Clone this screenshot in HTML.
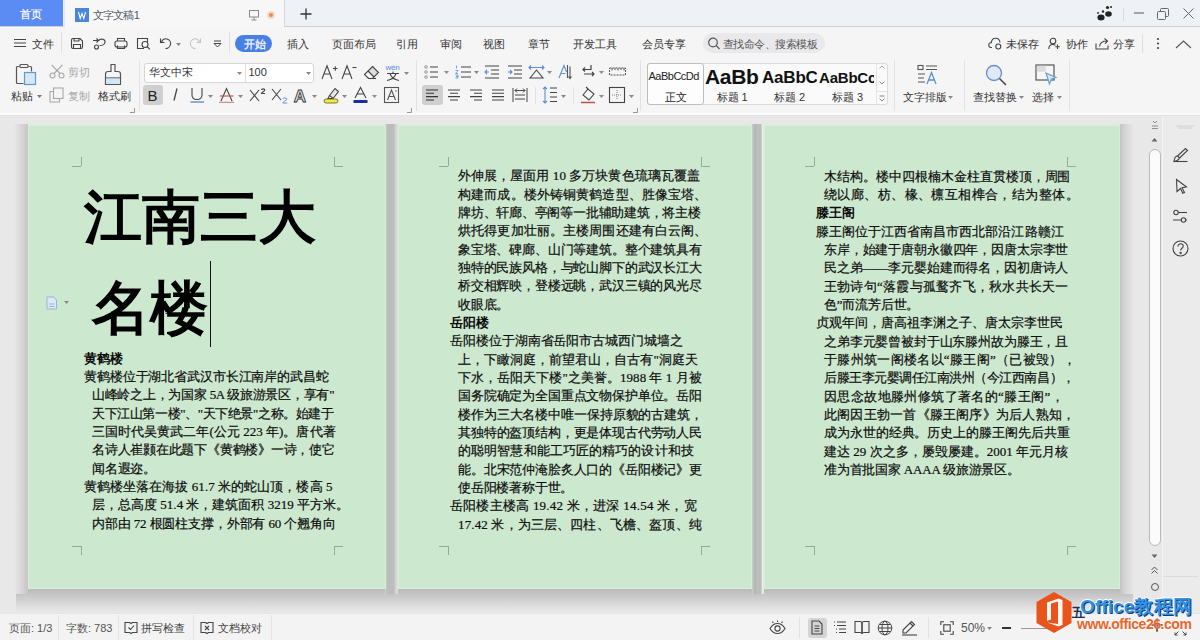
<!DOCTYPE html><html><head><meta charset="utf-8"><title>WPS 文字文稿1</title><style>
*{box-sizing:border-box}
html,body{margin:0;padding:0}
body{width:1200px;height:640px;overflow:hidden;position:relative;background:#e3e3e3;font-family:"Liberation Sans",sans-serif;color:#333}
.a{position:absolute}
svg.a{overflow:visible}
.tl{position:absolute;white-space:nowrap;font-family:"Liberation Serif",serif;font-size:13px;line-height:18.33px;color:#0c0c0c;-webkit-text-stroke:0.2px #0c0c0c}
.b{font-weight:bold;-webkit-text-stroke:0}
.page{position:absolute;top:124.5px;height:464px;background:#cce8cf;border:1px solid #d8ecd9}
</style></head><body>
<div class="a" style="left:0px;top:0px;width:1200px;height:27px;background:#eef1f5;border-bottom:1px solid #cdd1d6"></div>
<div class="a" style="left:0px;top:0px;width:63px;height:26px;background:#5a8cf4"></div>
<div class="a" style="left:20px;top:6.5px;font-size:11px;line-height:15px;color:#fff;font-weight:normal;font-family:'Liberation Sans',sans-serif;white-space:nowrap;-webkit-text-stroke:0.2px #fff">首页</div>
<div class="a" style="left:64px;top:0px;width:221px;height:27px;background:#f7f7f7;border-right:1px solid #d4d8dc;border-left:1px solid #e6e6e6"></div>
<div class="a" style="left:75px;top:8px;width:14px;height:14px;background:#4a86dc"></div>
<svg class="a" style="left:75px;top:8px" width="14" height="14" viewBox="0 0 14 14" fill="none" stroke="#fff" stroke-width="1.1" ><path d="M3.5 4 L5.2 10.5 L7 5.5 L8.8 10.5 L10.5 4" /></svg>
<div class="a" style="left:92.5px;top:7.5px;font-size:11px;line-height:15px;color:#505868;font-weight:normal;font-family:'Liberation Sans',sans-serif;white-space:nowrap;letter-spacing:-0.7px">文字文稿1</div>
<svg class="a" style="left:248px;top:9px" width="12" height="12" viewBox="0 0 12 12" fill="none" stroke="#888" stroke-width="1" ><rect x="1.5" y="1.5" width="9" height="6.5"/><path d="M6 8v3M3.5 11h5"/></svg>
<div class="a" style="left:267px;top:11px;width:8px;height:8px;border-radius:50%;background:#f6d9c4"></div>
<div class="a" style="left:268.8px;top:12.8px;width:4.4px;height:4.4px;border-radius:50%;background:#e98a55"></div>
<svg class="a" style="left:300px;top:8px" width="12" height="12" viewBox="0 0 12 12" fill="none" stroke="#333" stroke-width="1.3" ><path d="M6 0.5V11.5M0.5 6H11.5"/></svg>
<svg class="a" style="left:1095px;top:4px" width="20" height="18" viewBox="0 0 20 18" fill="none" stroke="none" stroke-width="1" ><ellipse cx="6" cy="13.5" rx="3.6" ry="3" fill="#222"/><ellipse cx="13.5" cy="10" rx="3.3" ry="2.8" fill="#222"/><circle cx="12.5" cy="3.5" r="1.6" fill="#222"/><circle cx="8" cy="7.5" r="1.2" fill="#222"/><circle cx="3" cy="9" r="0.9" fill="#222"/><circle cx="16" cy="3" r="1" fill="#222"/></svg>
<div class="a" style="left:1123px;top:8px;width:1px;height:13px;background:#d6d9dd"></div>
<svg class="a" style="left:1134px;top:12px" width="10" height="2" viewBox="0 0 10 2" fill="none" stroke="#666" stroke-width="1.1" ><path d="M0 1H10"/></svg>
<svg class="a" style="left:1157px;top:8px" width="12" height="12" viewBox="0 0 12 12" fill="none" stroke="#666" stroke-width="1" ><rect x="0.5" y="3.5" width="8" height="8" rx="1"/><path d="M3.5 3.5V1.5Q3.5 0.5 4.5 0.5H10.5Q11.5 0.5 11.5 1.5V7.5Q11.5 8.5 10.5 8.5H8.5"/></svg>
<svg class="a" style="left:1183px;top:8px" width="11" height="11" viewBox="0 0 11 11" fill="none" stroke="#666" stroke-width="1" ><path d="M0.5 0.5L10.5 10.5M10.5 0.5L0.5 10.5"/></svg>
<div class="a" style="left:0px;top:27px;width:1200px;height:31px;background:#f5f5f5"></div>
<svg class="a" style="left:14px;top:38px" width="12" height="10" viewBox="0 0 12 10" fill="none" stroke="#444" stroke-width="1.1" ><path d="M0 1.5H12M0 5H12M0 8.5H12"/></svg>
<div class="a" style="left:32px;top:36.5px;font-size:11px;line-height:15px;color:#333;font-weight:normal;font-family:'Liberation Sans',sans-serif;white-space:nowrap;">文件</div>
<div class="a" style="left:61px;top:32px;width:1px;height:21px;background:#e0e0e0"></div>
<svg class="a" style="left:70px;top:37px" width="14" height="13" viewBox="0 0 14 13" fill="none" stroke="#444" stroke-width="1.1" ><path d="M3 1.5H10L12.5 4V10Q12.5 11.5 11 11.5H3Q1.5 11.5 1.5 10V3Q1.5 1.5 3 1.5Z"/><path d="M4 1.5V4H9V1.5M3.5 11.5V7.5H10.5V11.5"/></svg>
<svg class="a" style="left:92px;top:37px" width="15" height="13" viewBox="0 0 15 13" fill="none" stroke="#444" stroke-width="1.1" ><path d="M1 3.5H6M4.5 1.5L6.5 3.5L4.5 5.5"/><path d="M6.5 3.5C9 1 13.5 2 13 5.5C12.5 8 9 8.5 7.5 8.5"/><circle cx="4.5" cy="10" r="2"/></svg>
<svg class="a" style="left:114px;top:37px" width="14" height="13" viewBox="0 0 14 13" fill="none" stroke="#444" stroke-width="1.1" ><path d="M3.5 4V1.5H10.5V4"/><rect x="1" y="4" width="12" height="6" rx="2"/><path d="M3.5 8.5V11.5H10.5V8.5"/></svg>
<svg class="a" style="left:136px;top:37px" width="15" height="13" viewBox="0 0 15 13" fill="none" stroke="#444" stroke-width="1.1" ><path d="M8 11.5H1.5V1.5H11.5V5"/><circle cx="9" cy="7.5" r="3"/><path d="M11 9.5L13.8 12.3"/></svg>
<svg class="a" style="left:159px;top:37px" width="13" height="13" viewBox="0 0 13 13" fill="none" stroke="#444" stroke-width="1.1" ><path d="M2.5 5C3.5 2.5 6 1.5 8 2C10.5 2.6 12 5 11.5 7.5C11 10 8.5 11.5 6.5 11.5"/><path d="M1.5 1.5V5.5H5.5"/></svg>
<svg class="a" style="left:176.0px;top:43.0px" width="5" height="3" viewBox="0 0 5 3" fill="#888" stroke="none" stroke-width="1" ><path d="M0 0H5L2.5 3Z"/></svg>
<svg class="a" style="left:189px;top:37px" width="13" height="13" viewBox="0 0 13 13" fill="none" stroke="#c4c4c4" stroke-width="1.1" ><path d="M10.5 5C9.5 2.5 7 1.5 5 2C2.5 2.6 1 5 1.5 7.5C2 10 4.5 11.5 6.5 11.5"/><path d="M11.5 1.5V5.5H7.5"/></svg>
<svg class="a" style="left:213px;top:40px" width="9" height="8" viewBox="0 0 9 8" fill="none" stroke="#444" stroke-width="1" ><path d="M1 1H8M1 3.5L4.5 7L8 3.5Z"/></svg>
<div class="a" style="left:229px;top:32px;width:1px;height:21px;background:#e0e0e0"></div>
<div class="a" style="left:234.8px;top:34.5px;width:37.5px;height:17px;background:#4a80e6;border-radius:8.5px"></div>
<div class="a" style="left:243.5px;top:36.5px;font-size:11px;line-height:15px;color:#fff;font-weight:normal;font-family:'Liberation Sans',sans-serif;white-space:nowrap;-webkit-text-stroke:0.25px #fff">开始</div>
<div class="a" style="left:287px;top:37.0px;font-size:11px;line-height:15px;color:#333;font-weight:normal;font-family:'Liberation Sans',sans-serif;white-space:nowrap;">插入</div>
<div class="a" style="left:331.5px;top:37.0px;font-size:11px;line-height:15px;color:#333;font-weight:normal;font-family:'Liberation Sans',sans-serif;white-space:nowrap;">页面布局</div>
<div class="a" style="left:396px;top:37.0px;font-size:11px;line-height:15px;color:#333;font-weight:normal;font-family:'Liberation Sans',sans-serif;white-space:nowrap;">引用</div>
<div class="a" style="left:440px;top:37.0px;font-size:11px;line-height:15px;color:#333;font-weight:normal;font-family:'Liberation Sans',sans-serif;white-space:nowrap;">审阅</div>
<div class="a" style="left:483px;top:37.0px;font-size:11px;line-height:15px;color:#333;font-weight:normal;font-family:'Liberation Sans',sans-serif;white-space:nowrap;">视图</div>
<div class="a" style="left:528px;top:37.0px;font-size:11px;line-height:15px;color:#333;font-weight:normal;font-family:'Liberation Sans',sans-serif;white-space:nowrap;">章节</div>
<div class="a" style="left:573px;top:37.0px;font-size:11px;line-height:15px;color:#333;font-weight:normal;font-family:'Liberation Sans',sans-serif;white-space:nowrap;">开发工具</div>
<div class="a" style="left:641.5px;top:37.0px;font-size:11px;line-height:15px;color:#333;font-weight:normal;font-family:'Liberation Sans',sans-serif;white-space:nowrap;">会员专享</div>
<div class="a" style="left:703px;top:33px;width:122px;height:20px;background:#e9e9eb;border-radius:10px"></div>
<svg class="a" style="left:707px;top:37px" width="14" height="13" viewBox="0 0 14 13" fill="none" stroke="#555" stroke-width="1.2" ><circle cx="6" cy="5.5" r="4.3"/><path d="M9.2 8.7L12.5 12"/></svg>
<div class="a" style="left:722.5px;top:36.5px;font-size:11px;line-height:15px;color:#555;font-weight:normal;font-family:'Liberation Sans',sans-serif;white-space:nowrap;letter-spacing:-0.45px">查找命令、搜索模板</div>
<svg class="a" style="left:988px;top:37px" width="15" height="13" viewBox="0 0 15 13" fill="none" stroke="#444" stroke-width="1.1" ><path d="M4 10.5H3C1.5 10.5 0.8 9.2 0.8 8C0.8 6.5 2 5.5 3.3 5.6C3.6 3 5.5 1.3 7.6 1.3C10 1.3 11.8 3 12 5.5"/><circle cx="10.3" cy="9.5" r="2.5"/></svg>
<div class="a" style="left:1006px;top:36.5px;font-size:11px;line-height:15px;color:#333;font-weight:normal;font-family:'Liberation Sans',sans-serif;white-space:nowrap;">未保存</div>
<svg class="a" style="left:1048px;top:37px" width="13" height="13" viewBox="0 0 13 13" fill="none" stroke="#444" stroke-width="1.1" ><circle cx="5" cy="4" r="2.8"/><path d="M0.8 12C0.8 9 2.5 7.5 5 7.5C6 7.5 6.8 7.8 7.4 8.2M9.5 7.5V12M7.3 9.8H11.8"/></svg>
<div class="a" style="left:1065.5px;top:36.5px;font-size:11px;line-height:15px;color:#333;font-weight:normal;font-family:'Liberation Sans',sans-serif;white-space:nowrap;">协作</div>
<svg class="a" style="left:1095px;top:37px" width="15" height="13" viewBox="0 0 15 13" fill="none" stroke="#444" stroke-width="1.1" ><path d="M1 6.5V12H13V8.5"/><path d="M4.5 9.5C5 6 8 4 12 4M9.5 1.5L12.5 4L10 6.8"/></svg>
<div class="a" style="left:1112.5px;top:36.5px;font-size:11px;line-height:15px;color:#333;font-weight:normal;font-family:'Liberation Sans',sans-serif;white-space:nowrap;">分享</div>
<div class="a" style="left:1142px;top:34px;width:1px;height:19px;background:#dedede"></div>
<svg class="a" style="left:1156px;top:37px" width="4" height="13" viewBox="0 0 4 13" fill="#444" stroke="none" stroke-width="1" ><circle cx="2" cy="2" r="1.1"/><circle cx="2" cy="6.5" r="1.1"/><circle cx="2" cy="11" r="1.1"/></svg>
<svg class="a" style="left:1175px;top:40px" width="17" height="9" viewBox="0 0 17 9" fill="none" stroke="#555" stroke-width="1.1" ><path d="M1 8L8.5 1L16 8"/></svg>
<div class="a" style="left:0px;top:58px;width:1200px;height:56px;background:#f5f5f5"></div>
<div class="a" style="left:0px;top:113px;width:1200px;height:3px;background:#fbfbfb;border-bottom:1px solid #e2e2e2"></div>
<svg class="a" style="left:15px;top:63px" width="22" height="23" viewBox="0 0 22 23" fill="none" stroke="#555" stroke-width="1.2" ><path d="M4.5 3.5H2.5C1.8 3.5 1.5 4 1.5 4.5V19.5C1.5 20 1.8 20.5 2.5 20.5H8.5"/><path d="M13.5 3.5H15.5C16.2 3.5 16.5 4 16.5 4.5V8.5"/><rect x="5" y="1.5" width="8" height="3" rx="1"/><rect x="9.5" y="9.5" width="11" height="12" fill="#d6e8f6" stroke="#5a9bd5"/></svg>
<div class="a" style="left:11px;top:89.0px;font-size:11px;line-height:15px;color:#333;font-weight:normal;font-family:'Liberation Sans',sans-serif;white-space:nowrap;">粘贴</div>
<svg class="a" style="left:36.5px;top:95.0px" width="5" height="3" viewBox="0 0 5 3" fill="#777" stroke="none" stroke-width="1" ><path d="M0 0H5L2.5 3Z"/></svg>
<svg class="a" style="left:49px;top:64px" width="16" height="15" viewBox="0 0 16 15" fill="none" stroke="#a8a8a8" stroke-width="1.1" ><circle cx="3.5" cy="11.5" r="2.5"/><circle cx="12.5" cy="11.5" r="2.5"/><path d="M5 9.5L13.5 0.8M11 9.5L2.5 0.8"/></svg>
<div class="a" style="left:67.5px;top:64.5px;font-size:11px;line-height:15px;color:#a6a6a6;font-weight:normal;font-family:'Liberation Sans',sans-serif;white-space:nowrap;">剪切</div>
<svg class="a" style="left:49px;top:87px" width="15" height="16" viewBox="0 0 15 16" fill="none" stroke="#a8a8a8" stroke-width="1.1" ><rect x="4.5" y="1" width="9.5" height="10.5"/><path d="M4.5 4.5H1V15H10.5V11.5"/></svg>
<div class="a" style="left:67.5px;top:88.5px;font-size:11px;line-height:15px;color:#a6a6a6;font-weight:normal;font-family:'Liberation Sans',sans-serif;white-space:nowrap;">复制</div>
<svg class="a" style="left:103px;top:63px" width="20" height="23" viewBox="0 0 20 23" fill="none" stroke="#555" stroke-width="1.2" ><path d="M8 1.5H12V8.5H15C16.5 8.5 17.5 9.5 17.5 11V21.5H2.5V11C2.5 9.5 3.5 8.5 5 8.5H8Z"/><path d="M2.7 15H17.3" /><rect x="3" y="15.5" width="14" height="5.5" fill="#d3e6f5" stroke="none"/></svg>
<div class="a" style="left:98px;top:89.0px;font-size:11px;line-height:15px;color:#333;font-weight:normal;font-family:'Liberation Sans',sans-serif;white-space:nowrap;">格式刷</div>
<svg class="a" style="left:130px;top:108px" width="5" height="5" viewBox="0 0 5 5" fill="none" stroke="#999" stroke-width="1" ><path d="M4.5 0V4.5H0"/></svg>
<div class="a" style="left:139px;top:60px;width:1px;height:51px;background:#e2e2e2"></div>
<div class="a" style="left:143.5px;top:62.5px;width:170.5px;height:20px;background:#fff;border:1px solid #d6d6d6;border-radius:3px"></div>
<div class="a" style="left:245px;top:63px;width:1px;height:19px;background:#dedede"></div>
<div class="a" style="left:149px;top:65.0px;font-size:11px;line-height:15px;color:#333;font-weight:normal;font-family:'Liberation Sans',sans-serif;white-space:nowrap;">华文中宋</div>
<svg class="a" style="left:237.0px;top:71.5px" width="5" height="3" viewBox="0 0 5 3" fill="#888" stroke="none" stroke-width="1" ><path d="M0 0H5L2.5 3Z"/></svg>
<div class="a" style="left:248.5px;top:65.0px;font-size:11px;line-height:15px;color:#333;font-weight:normal;font-family:'Liberation Sans',sans-serif;white-space:nowrap;">100</div>
<svg class="a" style="left:305.5px;top:71.5px" width="5" height="3" viewBox="0 0 5 3" fill="#888" stroke="none" stroke-width="1" ><path d="M0 0H5L2.5 3Z"/></svg>
<svg class="a" style="left:321px;top:64px" width="17" height="16" viewBox="0 0 17 16" fill="none" stroke="#444" stroke-width="1.1" ><path d="M1 15L6 1.8L11 15M3 10H9"/><path d="M12 4.5H16.5M14.25 2.2V6.8"/></svg>
<svg class="a" style="left:341px;top:64px" width="16" height="16" viewBox="0 0 16 16" fill="none" stroke="#444" stroke-width="1.1" ><path d="M1 15L6 1.8L11 15M3 10H9"/><path d="M11.5 3.5H15.5"/></svg>
<svg class="a" style="left:363px;top:65px" width="17" height="14" viewBox="0 0 17 14" fill="none" stroke="#444" stroke-width="1.1" ><path d="M9.5 1.5L15.5 7.5L11 12L5 6Z" fill="#dcdcdc" stroke="none"/><path d="M9.5 1.5L15.5 7.5L9.5 13.5H5.5L1.5 9.5Z"/><path d="M5 6L11 12"/><path d="M5.5 13.5H13"/></svg>
<div class="a" style="left:385.5px;top:62.0px;font-size:8px;line-height:12px;color:#4f8fe0;font-weight:normal;font-family:'Liberation Sans',sans-serif;white-space:nowrap;letter-spacing:-0.3px">wén</div>
<svg class="a" style="left:386px;top:71px" width="14" height="10" viewBox="0 0 14 10" fill="none" stroke="#444" stroke-width="1.1" ><path d="M7 0.5V2.5M1 2.5H13M4 2.5C5 6 8 8.5 13 9.5M10 2.5C9 6 6 8.5 1 9.5"/></svg>
<svg class="a" style="left:403.5px;top:71.5px" width="5" height="3" viewBox="0 0 5 3" fill="#888" stroke="none" stroke-width="1" ><path d="M0 0H5L2.5 3Z"/></svg>
<div class="a" style="left:143px;top:85px;width:20px;height:20px;background:#cfcfcf;border-radius:3px"></div>
<div class="a" style="left:147.5px;top:86.0px;font-size:15px;line-height:19px;color:#222;font-weight:normal;font-family:'Liberation Sans',sans-serif;white-space:nowrap;">B</div>
<svg class="a" style="left:171px;top:87px" width="9" height="15" viewBox="0 0 9 15" fill="none" stroke="#444" stroke-width="1.3" ><path d="M6 1.5L3 13.5"/></svg>
<svg class="a" style="left:190px;top:87px" width="15" height="16" viewBox="0 0 15 16" fill="none" stroke="#444" stroke-width="1.1" ><path d="M2 1V8C2 11 4 12.5 7 12.5C10 12.5 12 11 12 8V1"/><path d="M0.5 15H14" stroke="#3a6fb0"/></svg>
<svg class="a" style="left:207.5px;top:94.5px" width="5" height="3" viewBox="0 0 5 3" fill="#888" stroke="none" stroke-width="1" ><path d="M0 0H5L2.5 3Z"/></svg>
<svg class="a" style="left:219px;top:87px" width="16" height="16" viewBox="0 0 16 16" fill="none" stroke="#444" stroke-width="1.1" ><path d="M2 14L7.5 1.5L13 14"/><path d="M1 9H14.5" stroke="#c0504d"/><path d="M0 15.3H15" stroke="#c0504d" stroke-width="0.8"/></svg>
<svg class="a" style="left:237.5px;top:94.5px" width="5" height="3" viewBox="0 0 5 3" fill="#888" stroke="none" stroke-width="1" ><path d="M0 0H5L2.5 3Z"/></svg>
<svg class="a" style="left:249px;top:87px" width="17" height="16" viewBox="0 0 17 16" fill="none" stroke="#444" stroke-width="1.1" ><path d="M1 3L10 14M10 3L1 14"/><path d="M12.5 3C12.5 1.5 15.8 1.5 15.8 3C15.8 4 12.5 5.5 12.5 6.5H16"/></svg>
<svg class="a" style="left:271px;top:87px" width="17" height="17" viewBox="0 0 17 17" fill="none" stroke="#444" stroke-width="1.1" ><path d="M1 2L10 13M10 2L1 13"/></svg>
<svg class="a" style="left:282px;top:97px" width="6" height="7" viewBox="0 0 6 7" fill="none" stroke="#4f8fe0" stroke-width="0.9" ><path d="M0.8 2C0.8 0.5 5 0.5 5 2C5 3 0.8 4.5 0.8 6H5.3"/></svg>
<svg class="a" style="left:293px;top:86px" width="16" height="18" viewBox="0 0 16 18" fill="none" stroke="#333" stroke-width="0.9" ><text x="0.8" y="15.5" font-family="Liberation Sans" font-weight="bold" font-size="17">A</text></svg>
<svg class="a" style="left:311.5px;top:94.5px" width="5" height="3" viewBox="0 0 5 3" fill="#888" stroke="none" stroke-width="1" ><path d="M0 0H5L2.5 3Z"/></svg>
<svg class="a" style="left:323px;top:86px" width="17" height="18" viewBox="0 0 17 18" fill="none" stroke="#444" stroke-width="1.1" ><path d="M6.5 9.5L12 2.5L15.5 5.5L10 12.5Z" fill="#e6e6e6"/><path d="M6.5 9.5L5 12.5H10"/><rect x="1" y="13" width="14" height="4" rx="2" fill="#f2ea3a" stroke="#5a5a2a" stroke-width="0.8"/></svg>
<svg class="a" style="left:341.5px;top:94.5px" width="5" height="3" viewBox="0 0 5 3" fill="#888" stroke="none" stroke-width="1" ><path d="M0 0H5L2.5 3Z"/></svg>
<svg class="a" style="left:353px;top:86px" width="15" height="18" viewBox="0 0 15 18" fill="none" stroke="#444" stroke-width="1.1" ><path d="M2 12L7.5 1.5L13 12M4 8H11"/><rect x="0.5" y="14" width="14" height="3" fill="#1c2ba8" stroke="none"/></svg>
<svg class="a" style="left:371.5px;top:94.5px" width="5" height="3" viewBox="0 0 5 3" fill="#888" stroke="none" stroke-width="1" ><path d="M0 0H5L2.5 3Z"/></svg>
<svg class="a" style="left:384px;top:87px" width="15" height="16" viewBox="0 0 15 16" fill="none" stroke="#555" stroke-width="1.1" ><rect x="0.5" y="0.5" width="14" height="15"/><path d="M3.5 13L7.5 3L11.5 13M5 9.5H10"/><path d="M12 3V5" stroke-width="0.8"/></svg>
<svg class="a" style="left:407px;top:108px" width="5" height="5" viewBox="0 0 5 5" fill="none" stroke="#999" stroke-width="1" ><path d="M4.5 0V4.5H0"/></svg>
<div class="a" style="left:416px;top:60px;width:1px;height:51px;background:#e2e2e2"></div>
<svg class="a" style="left:424px;top:65px" width="17" height="14" viewBox="0 0 17 14" fill="none" stroke="#777" stroke-width="0.7" ><circle cx="2" cy="2" r="1.3"/><circle cx="2" cy="7" r="1.3"/><circle cx="2" cy="12" r="1.3"/><path d="M6 2H14M6 7H14M6 12H14" stroke="#444" stroke-width="1.2"/></svg>
<svg class="a" style="left:443.5px;top:70.5px" width="5" height="3" viewBox="0 0 5 3" fill="#888" stroke="none" stroke-width="1" ><path d="M0 0H5L2.5 3Z"/></svg>
<svg class="a" style="left:455px;top:65px" width="17" height="14" viewBox="0 0 17 14" fill="none" stroke="#444" stroke-width="1.1" ><path d="M1.5 0.5V3.5M0.5 5.5H3C3 7 0.5 7.5 0.5 8.5H3M0.5 10H3V13H0.5M1 11.5H3" stroke="#5b8fd6" stroke-width="0.8"/><path d="M6 2H16M6 7H16M6 12H16"/></svg>
<svg class="a" style="left:473.5px;top:70.5px" width="5" height="3" viewBox="0 0 5 3" fill="#888" stroke="none" stroke-width="1" ><path d="M0 0H5L2.5 3Z"/></svg>
<svg class="a" style="left:484px;top:65px" width="16" height="14" viewBox="0 0 16 14" fill="none" stroke="#444" stroke-width="1.1" ><path d="M1 1H15M7 5H15M7 9H15M1 13H15"/><path d="M5 7H1M3 5L1 7L3 9" stroke="#5b8fd6"/></svg>
<svg class="a" style="left:507px;top:65px" width="16" height="14" viewBox="0 0 16 14" fill="none" stroke="#444" stroke-width="1.1" ><path d="M1 1H15M7 5H15M7 9H15M1 13H15"/><path d="M1 7H5M3 5L5 7L3 9" stroke="#5b8fd6"/></svg>
<svg class="a" style="left:528px;top:64px" width="17" height="15" viewBox="0 0 17 15" fill="none" stroke="#444" stroke-width="1.1" ><path d="M2 14L8.5 6L15 14H2Z"/><path d="M1 3.5H16M3 1.5L1 3.5L3 5.5M14 1.5L16 3.5L14 5.5" stroke="#5b8fd6"/></svg>
<svg class="a" style="left:546.5px;top:70.5px" width="5" height="3" viewBox="0 0 5 3" fill="#888" stroke="none" stroke-width="1" ><path d="M0 0H5L2.5 3Z"/></svg>
<svg class="a" style="left:558px;top:64px" width="16" height="16" viewBox="0 0 16 16" fill="none" stroke="#555" stroke-width="1.1" ><path d="M1 14L6 1.5L8.5 8M3 9.5H7.5" stroke="#5b8fd6"/><path d="M9.5 1V14M12 2.5V14.5M10.5 12.5L12 14.5L13.5 12.5"/></svg>
<svg class="a" style="left:581px;top:64px" width="15" height="15" viewBox="0 0 15 15" fill="none" stroke="#444" stroke-width="1.2" ><path d="M10 1V5.5H2M4 3.5L2 5.5L4 7.5"/><path d="M3 10H13M11 8L13 10L11 12"/></svg>
<svg class="a" style="left:598.5px;top:70.5px" width="5" height="3" viewBox="0 0 5 3" fill="#888" stroke="none" stroke-width="1" ><path d="M0 0H5L2.5 3Z"/></svg>
<svg class="a" style="left:609px;top:65px" width="17" height="13" viewBox="0 0 17 13" fill="none" stroke="#555" stroke-width="1" ><rect x="0.5" y="3" width="16" height="7" stroke-dasharray="2 1"/><path d="M3 3V5.5M6 3V5M9 3V5.5M12 3V5M15 3V5.5"/></svg>
<div class="a" style="left:422px;top:85px;width:21px;height:20px;background:#cfcfcf;border-radius:3px"></div>
<svg class="a" style="left:426px;top:89px" width="13" height="12" viewBox="0 0 13 12" fill="none" stroke="#333" stroke-width="1.1" ><path d="M0 1H12M0 4.3H8M0 7.6H12M0 11H8"/></svg>
<svg class="a" style="left:448px;top:89px" width="13" height="12" viewBox="0 0 13 12" fill="none" stroke="#444" stroke-width="1.1" ><path d="M0 1H12M2 4.3H10M0 7.6H12M2 11H10"/></svg>
<svg class="a" style="left:470px;top:89px" width="13" height="12" viewBox="0 0 13 12" fill="none" stroke="#444" stroke-width="1.1" ><path d="M0 1H12M4 4.3H12M0 7.6H12M4 11H12"/></svg>
<svg class="a" style="left:492px;top:89px" width="13" height="12" viewBox="0 0 13 12" fill="none" stroke="#444" stroke-width="1.1" ><path d="M0 1H12M0 4.3H12M0 7.6H12M0 11H12"/></svg>
<svg class="a" style="left:512px;top:87px" width="16" height="16" viewBox="0 0 16 16" fill="none" stroke="#444" stroke-width="1.1" ><path d="M1 1V15M15 1V15M3 3.5H13M5 1.5L3 3.5L5 5.5M11 1.5L13 3.5L11 5.5" stroke-width="1"/><path d="M3 8H13M3 12H13"/></svg>
<div class="a" style="left:535px;top:87px;width:1px;height:17px;background:#e2e2e2"></div>
<svg class="a" style="left:542px;top:86px" width="16" height="18" viewBox="0 0 16 18" fill="none" stroke="#444" stroke-width="1.1" ><path d="M3 1V17M1 3L3 1L5 3M1 15L3 17L5 15" stroke="#5b8fd6"/><path d="M8 2H15M8 6.5H15M8 11H15M8 15.5H15"/></svg>
<svg class="a" style="left:560.5px;top:94.5px" width="5" height="3" viewBox="0 0 5 3" fill="#888" stroke="none" stroke-width="1" ><path d="M0 0H5L2.5 3Z"/></svg>
<div class="a" style="left:573px;top:87px;width:1px;height:17px;background:#e2e2e2"></div>
<svg class="a" style="left:580px;top:86px" width="17" height="18" viewBox="0 0 17 18" fill="none" stroke="#444" stroke-width="1.1" ><path d="M3 9L8 3L14 8L9 14Z"/><path d="M8 3L6 1"/><path d="M1 16.5H15" stroke="#c0504d" stroke-width="1.5"/></svg>
<svg class="a" style="left:598.5px;top:94.5px" width="5" height="3" viewBox="0 0 5 3" fill="#888" stroke="none" stroke-width="1" ><path d="M0 0H5L2.5 3Z"/></svg>
<svg class="a" style="left:609px;top:87px" width="16" height="16" viewBox="0 0 16 16" fill="none" stroke="#444" stroke-width="1.1" ><rect x="0.5" y="0.5" width="15" height="15"/><path d="M8 3V13M3 8H13" stroke-dasharray="1 1" stroke="#888"/></svg>
<svg class="a" style="left:628.5px;top:94.5px" width="5" height="3" viewBox="0 0 5 3" fill="#888" stroke="none" stroke-width="1" ><path d="M0 0H5L2.5 3Z"/></svg>
<svg class="a" style="left:633px;top:108px" width="5" height="5" viewBox="0 0 5 5" fill="none" stroke="#999" stroke-width="1" ><path d="M4.5 0V4.5H0"/></svg>
<div class="a" style="left:640px;top:60px;width:1px;height:51px;background:#e2e2e2"></div>
<div class="a" style="left:646.5px;top:62.5px;width:241.5px;height:42px;background:#fafafa;border:1px solid #dcdcdc;border-radius:3px"></div>
<div class="a" style="left:646.5px;top:62.5px;width:57px;height:42px;background:#fdfdfd;border:1px solid #bdbdbd;border-radius:3px"></div>
<div class="a" style="left:648.5px;top:69.0px;font-size:11px;line-height:15px;color:#222;font-weight:normal;font-family:'Liberation Sans',sans-serif;white-space:nowrap;letter-spacing:-0.5px">AaBbCcDd</div>
<div class="a" style="left:665px;top:89.5px;font-size:11px;line-height:15px;color:#222;font-weight:normal;font-family:'Liberation Sans',sans-serif;white-space:nowrap;">正文</div>
<div class="a" style="left:705px;top:64.0px;font-size:21px;line-height:25px;color:#111;font-weight:bold;font-family:'Liberation Sans',sans-serif;white-space:nowrap;letter-spacing:-0.3px">AaBb</div>
<div class="a" style="left:716.5px;top:89.5px;font-size:11px;line-height:15px;color:#333;font-weight:normal;font-family:'Liberation Sans',sans-serif;white-space:nowrap;">标题 1</div>
<div class="a" style="left:762px;top:64px;width:55px;height:26px;overflow:hidden"><div class="a" style="left:0px;top:2.5px;font-size:17px;line-height:21px;color:#111;font-weight:bold;font-family:'Liberation Sans',sans-serif;white-space:nowrap;letter-spacing:-0.2px">AaBbC</div></div>
<div class="a" style="left:774px;top:89.5px;font-size:11px;line-height:15px;color:#333;font-weight:normal;font-family:'Liberation Sans',sans-serif;white-space:nowrap;">标题 2</div>
<div class="a" style="left:819px;top:64px;width:55px;height:26px;overflow:hidden"><div class="a" style="left:0px;top:3.5px;font-size:15px;line-height:19px;color:#111;font-weight:bold;font-family:'Liberation Sans',sans-serif;white-space:nowrap;letter-spacing:-0.2px">AaBbCc</div></div>
<div class="a" style="left:832px;top:89.5px;font-size:11px;line-height:15px;color:#333;font-weight:normal;font-family:'Liberation Sans',sans-serif;white-space:nowrap;">标题 3</div>
<div class="a" style="left:876px;top:63px;width:1px;height:41px;background:#e4e4e4"></div>
<svg class="a" style="left:879px;top:65px" width="6" height="4" viewBox="0 0 6 4" fill="none" stroke="#aaa" stroke-width="1" ><path d="M0.5 3.5L3 1L5.5 3.5"/></svg>
<svg class="a" style="left:879px;top:81px" width="6" height="4" viewBox="0 0 6 4" fill="none" stroke="#888" stroke-width="1" ><path d="M0.5 0.5L3 3L5.5 0.5"/></svg>
<div class="a" style="left:877px;top:91px;width:10px;height:1px;background:#e4e4e4"></div>
<svg class="a" style="left:879px;top:95px" width="6" height="7" viewBox="0 0 6 7" fill="none" stroke="#888" stroke-width="1" ><path d="M0.5 1H5.5M0.5 3.5L3 6L5.5 3.5"/></svg>
<div class="a" style="left:893.5px;top:60px;width:1px;height:51px;background:#e2e2e2"></div>
<svg class="a" style="left:917px;top:64px" width="22" height="22" viewBox="0 0 22 22" fill="none" stroke="#555" stroke-width="1.1" ><rect x="1" y="1.5" width="5" height="4"/><path d="M9 2H20M9 5.5H20M1 10H8M1 14H7M1 18H8"/><path d="M10 20L14.5 8.5L19 20M11.5 16H17.5" stroke="#5b8fd6" stroke-width="1.3"/></svg>
<div class="a" style="left:903px;top:89.5px;font-size:11px;line-height:15px;color:#333;font-weight:normal;font-family:'Liberation Sans',sans-serif;white-space:nowrap;">文字排版</div>
<svg class="a" style="left:948.0px;top:95.5px" width="5" height="3" viewBox="0 0 5 3" fill="#888" stroke="none" stroke-width="1" ><path d="M0 0H5L2.5 3Z"/></svg>
<div class="a" style="left:963.5px;top:60px;width:1px;height:51px;background:#e2e2e2"></div>
<svg class="a" style="left:985px;top:64px" width="23" height="22" viewBox="0 0 23 22" fill="none" stroke="none" stroke-width="1" ><circle cx="9" cy="9" r="7.5" fill="#dfe9f8" stroke="#6a8fc6" stroke-width="1.3"/><path d="M14.5 14.5L21 21" stroke="#444" stroke-width="1.5"/></svg>
<div class="a" style="left:972.5px;top:89.5px;font-size:11px;line-height:15px;color:#333;font-weight:normal;font-family:'Liberation Sans',sans-serif;white-space:nowrap;">查找替换</div>
<svg class="a" style="left:1018.5px;top:95.5px" width="5" height="3" viewBox="0 0 5 3" fill="#888" stroke="none" stroke-width="1" ><path d="M0 0H5L2.5 3Z"/></svg>
<svg class="a" style="left:1035px;top:64px" width="23" height="23" viewBox="0 0 23 23" fill="none" stroke="#555" stroke-width="1.2" ><rect x="1" y="1" width="18" height="15" stroke="#555"/><rect x="1.8" y="1.8" width="9" height="6" fill="#dcdcdc" stroke="none"/><path d="M11 9L21 13.5L16.5 15L14.5 20Z" fill="#d5e6f6" stroke="#6a9fd6"/></svg>
<div class="a" style="left:1032px;top:89.5px;font-size:11px;line-height:15px;color:#333;font-weight:normal;font-family:'Liberation Sans',sans-serif;white-space:nowrap;">选择</div>
<svg class="a" style="left:1056.5px;top:95.5px" width="5" height="3" viewBox="0 0 5 3" fill="#888" stroke="none" stroke-width="1" ><path d="M0 0H5L2.5 3Z"/></svg>
<div class="a" style="left:1069px;top:60px;width:1px;height:51px;background:#e2e2e2"></div>
<div class="a" style="left:0px;top:116px;width:1143px;height:497px;background:#e8e8e8"></div>
<div class="a" style="left:16px;top:588px;width:1117px;height:25px;background:linear-gradient(#b9b9b9 0px,#c2c2c2 5px,#d3d3d3 13px,#e2e2e2 20px,#e8e8e8 25px)"></div>
<div class="a" style="left:14px;top:124px;width:14px;height:470px;background:linear-gradient(90deg,#e8e8e8,#d6d3d6 60%,#c4c6c4)"></div>
<div class="a" style="left:1120px;top:124px;width:14px;height:470px;background:linear-gradient(90deg,#c4c4c4,#d6d6d6 40%,#e8e8e8)"></div>
<div class="a" style="left:385px;top:124px;width:13px;height:470px;background:linear-gradient(90deg,#c9d5c9 0,#b7bfb7 2.5px,#bdbcbd 4px,#bebdbe 9px,#cfd4cf 10.5px,#d9e6d9 13px)"></div>
<div class="a" style="left:751.5px;top:124px;width:12.5px;height:470px;background:linear-gradient(90deg,#c5d2c5 0,#b2b7b2 3px,#bcbdbc 5px,#bdbebd 9px,#e5f2e5 10.5px,#d4e6d4 12.5px)"></div>
<div class="page" style="left:28px;width:357.5px"></div>
<div class="page" style="left:397.5px;width:354.5px"></div>
<div class="page" style="left:763.5px;width:356.5px"></div>
<div class="a" style="left:71.5px;top:166px;width:9px;height:1px;background:#9aa89c"></div>
<div class="a" style="left:80.5px;top:157px;width:1px;height:9px;background:#9aa89c"></div>
<div class="a" style="left:333.5px;top:166px;width:9px;height:1px;background:#9aa89c"></div>
<div class="a" style="left:333.5px;top:157px;width:1px;height:9px;background:#9aa89c"></div>
<div class="a" style="left:71.5px;top:546px;width:9px;height:1px;background:#9aa89c"></div>
<div class="a" style="left:80.5px;top:546px;width:1px;height:9px;background:#9aa89c"></div>
<div class="a" style="left:333.5px;top:546px;width:9px;height:1px;background:#9aa89c"></div>
<div class="a" style="left:333.5px;top:546px;width:1px;height:9px;background:#9aa89c"></div>
<div class="a" style="left:438.5px;top:166px;width:9px;height:1px;background:#9aa89c"></div>
<div class="a" style="left:447.5px;top:157px;width:1px;height:9px;background:#9aa89c"></div>
<div class="a" style="left:700.5px;top:166px;width:9px;height:1px;background:#9aa89c"></div>
<div class="a" style="left:700.5px;top:157px;width:1px;height:9px;background:#9aa89c"></div>
<div class="a" style="left:438.5px;top:546px;width:9px;height:1px;background:#9aa89c"></div>
<div class="a" style="left:447.5px;top:546px;width:1px;height:9px;background:#9aa89c"></div>
<div class="a" style="left:700.5px;top:546px;width:9px;height:1px;background:#9aa89c"></div>
<div class="a" style="left:700.5px;top:546px;width:1px;height:9px;background:#9aa89c"></div>
<div class="a" style="left:805px;top:166px;width:9px;height:1px;background:#9aa89c"></div>
<div class="a" style="left:814px;top:157px;width:1px;height:9px;background:#9aa89c"></div>
<div class="a" style="left:1067px;top:166px;width:9px;height:1px;background:#9aa89c"></div>
<div class="a" style="left:1067px;top:157px;width:1px;height:9px;background:#9aa89c"></div>
<div class="a" style="left:805px;top:546px;width:9px;height:1px;background:#9aa89c"></div>
<div class="a" style="left:814px;top:546px;width:1px;height:9px;background:#9aa89c"></div>
<div class="a" style="left:1067px;top:546px;width:9px;height:1px;background:#9aa89c"></div>
<div class="a" style="left:1067px;top:546px;width:1px;height:9px;background:#9aa89c"></div>
<div id="L0_0" class="tl b" style="left:84.0px;top:349.60px">黄鹤楼</div>
<div id="L0_1" class="tl" style="left:84.0px;top:367.93px;letter-spacing:-0.116px">黄鹤楼位于湖北省武汉市长江南岸的武昌蛇</div>
<div id="L0_2" class="tl" style="left:92.0px;top:386.26px;letter-spacing:-0.262px">山峰岭之上，为国家 5A 级旅游景区，享有"</div>
<div id="L0_3" class="tl" style="left:92.0px;top:404.59px;letter-spacing:-0.400px">天下江山第一楼"、"天下绝景"之称。始建于</div>
<div id="L0_4" class="tl" style="left:92.0px;top:422.92px;letter-spacing:0.042px">三国时代吴黄武二年(公元 223 年)。唐代著</div>
<div id="L0_5" class="tl" style="left:92.0px;top:441.25px;letter-spacing:-0.222px">名诗人崔颢在此题下《黄鹤楼》一诗，使它</div>
<div id="L0_6" class="tl" style="left:92.0px;top:459.58px;letter-spacing:-0.200px">闻名遐迩。</div>
<div id="L0_7" class="tl" style="left:84.0px;top:477.91px;letter-spacing:0.061px">黄鹤楼坐落在海拔 61.7 米的蛇山顶，楼高 5</div>
<div id="L0_8" class="tl" style="left:92.0px;top:496.24px;letter-spacing:0.015px">层，总高度 51.4 米，建筑面积 3219 平方米。</div>
<div id="L0_9" class="tl" style="left:92.0px;top:514.57px;letter-spacing:-0.134px">内部由 72 根圆柱支撑，外部有 60 个翘角向</div>
<div id="L1_0" class="tl" style="left:458.0px;top:167.30px;letter-spacing:0.070px">外伸展，屋面用 10 多万块黄色琉璃瓦覆盖</div>
<div id="L1_1" class="tl" style="left:458.0px;top:185.63px;letter-spacing:0.133px">构建而成。楼外铸铜黄鹤造型、胜像宝塔、</div>
<div id="L1_2" class="tl" style="left:458.0px;top:203.96px;letter-spacing:-0.222px">牌坊、轩廊、亭阁等一批辅助建筑，将主楼</div>
<div id="L1_3" class="tl" style="left:458.0px;top:222.29px;letter-spacing:0.133px">烘托得更加壮丽。主楼周围还建有白云阁、</div>
<div id="L1_4" class="tl" style="left:458.0px;top:240.62px;letter-spacing:-0.178px">象宝塔、碑廊、山门等建筑。整个建筑具有</div>
<div id="L1_5" class="tl" style="left:458.0px;top:258.95px;letter-spacing:-0.178px">独特的民族风格，与蛇山脚下的武汉长江大</div>
<div id="L1_6" class="tl" style="left:458.0px;top:277.28px;letter-spacing:-0.178px">桥交相辉映，登楼远眺，武汉三镇的风光尽</div>
<div id="L1_7" class="tl" style="left:458.0px;top:295.61px;letter-spacing:-0.200px">收眼底。</div>
<div id="L1_8" class="tl b" style="left:450.0px;top:313.94px">岳阳楼</div>
<div id="L1_9" class="tl" style="left:450.0px;top:332.27px;letter-spacing:-0.071px">岳阳楼位于湖南省岳阳市古城西门城墙之</div>
<div id="L1_10" class="tl" style="left:458.0px;top:350.60px;letter-spacing:0.033px">上，下瞰洞庭，前望君山，自古有"洞庭天</div>
<div id="L1_11" class="tl" style="left:458.0px;top:368.93px;letter-spacing:0.052px">下水，岳阳天下楼"之美誉。1988 年 1 月被</div>
<div id="L1_12" class="tl" style="left:458.0px;top:387.26px;letter-spacing:-0.166px">国务院确定为全国重点文物保护单位。岳阳</div>
<div id="L1_13" class="tl" style="left:458.0px;top:405.59px;letter-spacing:-0.111px">楼作为三大名楼中唯一保持原貌的古建筑，</div>
<div id="L1_14" class="tl" style="left:458.0px;top:423.92px;letter-spacing:-0.166px">其独特的盔顶结构，更是体现古代劳动人民</div>
<div id="L1_15" class="tl" style="left:458.0px;top:442.25px;letter-spacing:0.105px">的聪明智慧和能工巧匠的精巧的设计和技</div>
<div id="L1_16" class="tl" style="left:458.0px;top:460.58px;letter-spacing:-0.166px">能。北宋范仲淹脍炙人口的《岳阳楼记》更</div>
<div id="L1_17" class="tl" style="left:458.0px;top:478.91px;letter-spacing:-0.200px">使岳阳楼著称于世。</div>
<div id="L1_18" class="tl" style="left:450.0px;top:497.24px;letter-spacing:0.234px">岳阳楼主楼高 19.42 米，进深 14.54 米，宽</div>
<div id="L1_19" class="tl" style="left:458.0px;top:515.57px;letter-spacing:0.153px">17.42 米，为三层、四柱、飞檐、盔顶、纯</div>
<div id="L2_0" class="tl" style="left:824.0px;top:167.60px;letter-spacing:-0.028px">木结构。楼中四根楠木金柱直贯楼顶，周围</div>
<div id="L2_1" class="tl" style="left:824.0px;top:185.93px;letter-spacing:0.417px">绕以廊、枋、椽、檩互相榫合，结为整体。</div>
<div id="L2_2" class="tl b" style="left:816.0px;top:204.26px">滕王阁</div>
<div id="L2_3" class="tl" style="left:816.0px;top:222.59px;letter-spacing:0.033px">滕王阁位于江西省南昌市西北部沿江路赣江</div>
<div id="L2_4" class="tl" style="left:824.0px;top:240.92px;letter-spacing:-0.139px">东岸，始建于唐朝永徽四年，因唐太宗李世</div>
<div id="L2_5" class="tl" style="left:824.0px;top:259.25px;letter-spacing:-0.139px">民之弟——李元婴始建而得名，因初唐诗人</div>
<div id="L2_6" class="tl" style="left:824.0px;top:277.58px;letter-spacing:0.249px">王勃诗句“落霞与孤鹜齐飞，秋水共长天一</div>
<div id="L2_7" class="tl" style="left:824.0px;top:295.91px;letter-spacing:-0.200px">色”而流芳后世。</div>
<div id="L2_8" class="tl" style="left:816.0px;top:314.24px">贞观年间，唐高祖李渊之子、唐太宗李世民</div>
<div id="L2_9" class="tl" style="left:824.0px;top:332.57px;letter-spacing:-0.156px">之弟李元婴曾被封于山东滕州故为滕王，且</div>
<div id="L2_10" class="tl" style="left:824.0px;top:350.90px;letter-spacing:0.316px">于滕州筑一阁楼名以“滕王阁”（已被毁），</div>
<div id="L2_11" class="tl" style="left:824.0px;top:369.23px;letter-spacing:-0.469px">后滕王李元婴调任江南洪州（今江西南昌），</div>
<div id="L2_12" class="tl" style="left:824.0px;top:387.56px;letter-spacing:0.389px">因思念故地滕州修筑了著名的“滕王阁”，</div>
<div id="L2_13" class="tl" style="left:824.0px;top:405.89px;letter-spacing:0.227px">此阁因王勃一首《滕王阁序》为后人熟知，</div>
<div id="L2_14" class="tl" style="left:824.0px;top:424.22px;letter-spacing:-0.078px">成为永世的经典。历史上的滕王阁先后共重</div>
<div id="L2_15" class="tl" style="left:824.0px;top:442.55px;letter-spacing:0.009px">建达 29 次之多，屡毁屡建。2001 年元月核</div>
<div id="L2_16" class="tl" style="left:824.0px;top:460.88px;letter-spacing:-0.200px">准为首批国家 AAAA 级旅游景区。</div>
<div class="a" style="left:84px;top:172px;white-space:nowrap;font-family:'Liberation Serif',serif;font-weight:bold;font-size:58px;line-height:91px;color:#000">江南三大</div>
<div class="a" style="left:92px;top:263px;white-space:nowrap;font-family:'Liberation Serif',serif;font-weight:bold;font-size:58px;line-height:91px;color:#000">名楼</div>
<div class="a" style="left:209.5px;top:261px;width:1.5px;height:86px;background:#111"></div>
<svg class="a" style="left:46px;top:296px" width="12" height="14" viewBox="0 0 12 14" fill="none" stroke="none" stroke-width="1" ><path d="M1 1H7.5L10.5 4V13H1Z" fill="#dce8f5" stroke="#9bb5d6"/><path d="M3 8H8.5M3 10.5H8.5" stroke="#9bb5d6"/></svg>
<svg class="a" style="left:63.5px;top:300.5px" width="5" height="3" viewBox="0 0 5 3" fill="#8a8a8a" stroke="none" stroke-width="1" ><path d="M0 0H5L2.5 3Z"/></svg>
<div class="a" style="left:1143px;top:116px;width:20px;height:497px;background:#e8e8e8"></div>
<div class="a" style="left:1162px;top:116px;width:38px;height:497px;background:#ebebeb;border-left:1px solid #f4f4f4"></div>
<svg class="a" style="left:1150px;top:120px" width="10" height="10" viewBox="0 0 10 10" fill="none" stroke="#777" stroke-width="1" ><path d="M3 1L5 3L7 1M2 6H8M2 8.5H8" stroke-width="0.8"/></svg>
<svg class="a" style="left:1151px;top:137px" width="7" height="5" viewBox="0 0 7 5" fill="#666" stroke="none" stroke-width="1" ><path d="M0.5 4.5L3.5 1L6.5 4.5Z"/></svg>
<div class="a" style="left:1148.5px;top:149px;width:12px;height:397px;background:#fbfbfb;border:1px solid #b9b9b9;border-radius:6px"></div>
<svg class="a" style="left:1151px;top:554px" width="7" height="5" viewBox="0 0 7 5" fill="#666" stroke="none" stroke-width="1" ><path d="M0.5 0.5L3.5 4L6.5 0.5Z"/></svg>
<svg class="a" style="left:1151px;top:566px" width="7" height="8" viewBox="0 0 7 8" fill="none" stroke="#555" stroke-width="1" ><path d="M0.5 4L3.5 1L6.5 4M0.5 7.5L3.5 4.5L6.5 7.5"/></svg>
<svg class="a" style="left:1150px;top:582px" width="10" height="10" viewBox="0 0 10 10" fill="none" stroke="#555" stroke-width="1" ><circle cx="5" cy="5" r="3.5"/></svg>
<div class="a" style="left:1163px;top:576px;width:35px;height:1px;background:#dcdcdc"></div>
<svg class="a" style="left:1176px;top:125px" width="18" height="4" viewBox="0 0 18 4" fill="none" stroke="#c9c9c9" stroke-width="0.8" ><path d="M0 1H18M2 3H16"/></svg>
<svg class="a" style="left:1172px;top:147px" width="17" height="16" viewBox="0 0 17 16" fill="none" stroke="#444" stroke-width="1.1" ><path d="M5.5 9L13.5 1.5L15.5 3.5L7.5 11"/><path d="M5.5 9C3.5 9 2.5 10.5 2 14.5C4.5 14 6.5 13.5 7.5 11Z"/><path d="M1.5 14.5H15.5"/></svg>
<svg class="a" style="left:1175px;top:178px" width="13" height="16" viewBox="0 0 13 16" fill="none" stroke="#444" stroke-width="1.1" ><path d="M1.5 1.5L11.5 9L7 9.7L9.5 14.5L7.8 15.2L5.5 10.5L2 13.5Z"/></svg>
<svg class="a" style="left:1172px;top:209px" width="16" height="15" viewBox="0 0 16 15" fill="none" stroke="#444" stroke-width="1.1" ><circle cx="4" cy="3.5" r="2.2"/><path d="M6.2 3.5H15"/><circle cx="11.5" cy="11" r="2.2"/><path d="M1 11H9.3M13.7 11H15"/></svg>
<svg class="a" style="left:1172px;top:240px" width="17" height="17" viewBox="0 0 17 17" fill="none" stroke="#444" stroke-width="1.1" ><circle cx="8.5" cy="8.5" r="7.5"/><path d="M6 6.5C6 4.5 7.5 3.8 8.6 3.8C10 3.8 11.2 4.8 11.2 6.2C11.2 8 8.6 8.5 8.6 10.5"/><circle cx="8.6" cy="13" r="0.6" fill="#444"/></svg>
<div class="a" style="left:0px;top:613px;width:1200px;height:27px;background:#f3f3f3;border-top:1px solid #e6e6e6"></div>
<div class="a" style="left:9px;top:621.3px;font-size:11px;line-height:15px;color:#555;font-weight:normal;font-family:'Liberation Sans',sans-serif;white-space:nowrap;">页面: 1/3</div>
<div class="a" style="left:58px;top:615px;width:1px;height:25px;background:#e4e4e4"></div>
<div class="a" style="left:66px;top:621.3px;font-size:11px;line-height:15px;color:#555;font-weight:normal;font-family:'Liberation Sans',sans-serif;white-space:nowrap;">字数: 783</div>
<div class="a" style="left:117.5px;top:615px;width:1px;height:25px;background:#e4e4e4"></div>
<svg class="a" style="left:124px;top:621px" width="14" height="13" viewBox="0 0 14 13" fill="none" stroke="#444" stroke-width="1.1" ><path d="M1 1.5H5.5L7 2.5L8.5 1.5H13V11.5H8.5L7 12.5L5.5 11.5H1Z"/><path d="M4.5 6.5L6.5 8.5L10 4.5"/></svg>
<div class="a" style="left:141px;top:621.3px;font-size:11px;line-height:15px;color:#444;font-weight:normal;font-family:'Liberation Sans',sans-serif;white-space:nowrap;">拼写检查</div>
<div class="a" style="left:192.5px;top:615px;width:1px;height:25px;background:#e4e4e4"></div>
<svg class="a" style="left:200px;top:621px" width="14" height="13" viewBox="0 0 14 13" fill="none" stroke="#444" stroke-width="1.1" ><path d="M1 1.5H5.5L7 2.5L8.5 1.5H13V11.5H8.5L7 12.5L5.5 11.5H1Z"/><path d="M5 5L9 9M9 5L5 9"/></svg>
<div class="a" style="left:217.5px;top:621.3px;font-size:11px;line-height:15px;color:#444;font-weight:normal;font-family:'Liberation Sans',sans-serif;white-space:nowrap;">文档校对</div>
<div class="a" style="left:271px;top:615px;width:1px;height:25px;background:#e4e4e4"></div>
<svg class="a" style="left:769px;top:620px" width="17" height="15" viewBox="0 0 17 15" fill="none" stroke="#444" stroke-width="1.1" ><path d="M1 8.5C3 5 5.5 3.5 8.5 3.5C11.5 3.5 14 5 16 8.5C14 12 11.5 13.5 8.5 13.5C5.5 13.5 3 12 1 8.5Z"/><circle cx="8.5" cy="8.5" r="2.6"/><path d="M8.5 0.5V2M3.5 1.5L4.3 3M13.5 1.5L12.7 3"/></svg>
<div class="a" style="left:798.5px;top:617px;width:1px;height:21px;background:#e2e2e2"></div>
<div class="a" style="left:807.5px;top:617.5px;width:19px;height:20px;background:#d4d4d4;border-radius:3px"></div>
<svg class="a" style="left:811px;top:620px" width="12" height="15" viewBox="0 0 12 15" fill="none" stroke="#444" stroke-width="1.1" ><path d="M1 1H8L11 4V14H1Z"/><path d="M3.5 6H8.5M3.5 8.5H8.5M3.5 11H8.5"/></svg>
<svg class="a" style="left:833px;top:620px" width="14" height="15" viewBox="0 0 14 15" fill="none" stroke="#444" stroke-width="1.1" ><path d="M1 2H2M4 2H13M1 5.5H2M4 5.5H13M3 9H4M6 9H13M3 12.5H4M6 12.5H13"/></svg>
<svg class="a" style="left:854px;top:620px" width="16" height="15" viewBox="0 0 16 15" fill="none" stroke="#444" stroke-width="1.1" ><path d="M1 1.5H6C7 1.5 8 2.3 8 3.5V14C8 13 7 12.5 6 12.5H1Z"/><path d="M15 1.5H10C9 1.5 8 2.3 8 3.5V14C8 13 9 12.5 10 12.5H15Z"/></svg>
<svg class="a" style="left:877px;top:620px" width="16" height="16" viewBox="0 0 16 16" fill="none" stroke="#444" stroke-width="1" ><circle cx="8" cy="8" r="6.8"/><ellipse cx="8" cy="8" rx="3" ry="6.8"/><path d="M1.2 8H14.8M2.5 4.5H13.5M2.5 11.5H13.5"/></svg>
<svg class="a" style="left:900px;top:619px" width="18" height="17" viewBox="0 0 18 17" fill="none" stroke="#444" stroke-width="1.1" ><path d="M3 11L11.5 2.5L14.5 5.5L6 14H3Z"/><path d="M10 4L13 7"/><path d="M2 16H17"/></svg>
<div class="a" style="left:927.5px;top:617px;width:1px;height:21px;background:#e2e2e2"></div>
<svg class="a" style="left:940px;top:621px" width="14" height="14" viewBox="0 0 14 14" fill="none" stroke="#444" stroke-width="1.1" ><path d="M0.8 4V0.8H4M10 0.8H13.2V4M13.2 10V13.2H10M4 13.2H0.8V10"/><rect x="3.8" y="3.8" width="6.4" height="6.4"/></svg>
<div class="a" style="left:961px;top:619.5px;font-size:12px;line-height:16px;color:#555;font-weight:normal;font-family:'Liberation Sans',sans-serif;white-space:nowrap;">50%</div>
<svg class="a" style="left:986.5px;top:626.5px" width="5" height="3" viewBox="0 0 5 3" fill="#888" stroke="none" stroke-width="1" ><path d="M0 0H5L2.5 3Z"/></svg>
<div class="a" style="left:1002px;top:627px;width:9px;height:2px;background:#333"></div>
<div class="a" style="left:1021px;top:627.5px;width:30px;height:1px;background:#999"></div>
<svg class="a" style="left:1174px;top:627px" width="13" height="9" viewBox="0 0 13 9" fill="none" stroke="#444" stroke-width="1" ><path d="M1 8L4.5 4.5M1 8H3.5M1 8V5.5M12 8L8.5 4.5M12 8H9.5M12 8V5.5"/></svg>
<svg class="a" style="left:1151px;top:618px" width="12" height="14" viewBox="0 0 12 14" fill="none" stroke="#222" stroke-width="1.6" ><path d="M6 0.5V13.5M0.5 7H11.5"/></svg>
<div class="a" style="left:1072px;top:603.5px;font-size:13px;line-height:17px;color:#1b2f55;font-weight:bold;font-family:'Liberation Sans',sans-serif;white-space:nowrap;">五</div>
<svg class="a" style="left:1035px;top:591px" width="38" height="43" viewBox="0 0 38 43" fill="none" stroke="none" stroke-width="1" ><path d="M19 1L36.5 11V32L19 42L1.5 32V11Z" fill="#e8541c" stroke="none"/><path d="M12 11.5L23.5 7.5L27.5 9V34L23.5 35.5L12 31.5L23 33V10.5L16 12.5V28.5L12 30Z" fill="#fff" stroke="none" opacity="0.95"/></svg>
<div class="a" style="left:1080px;top:594.5px;font-size:19px;line-height:23px;color:#2e93e8;font-weight:bold;font-family:'Liberation Sans',sans-serif;white-space:nowrap;letter-spacing:0.1px;text-shadow:1px 1px 0 #1e3a66,-1px 0 0 #fff,0 -1px 0 #fff">Office教程网</div>
<div class="a" style="left:1077px;top:614.5px;font-size:14px;line-height:18px;color:#e8652c;font-weight:bold;font-family:'Liberation Sans',sans-serif;white-space:nowrap;letter-spacing:-0.45px;text-shadow:0 0 2px #fff">www.office26.com</div>
</body></html>
